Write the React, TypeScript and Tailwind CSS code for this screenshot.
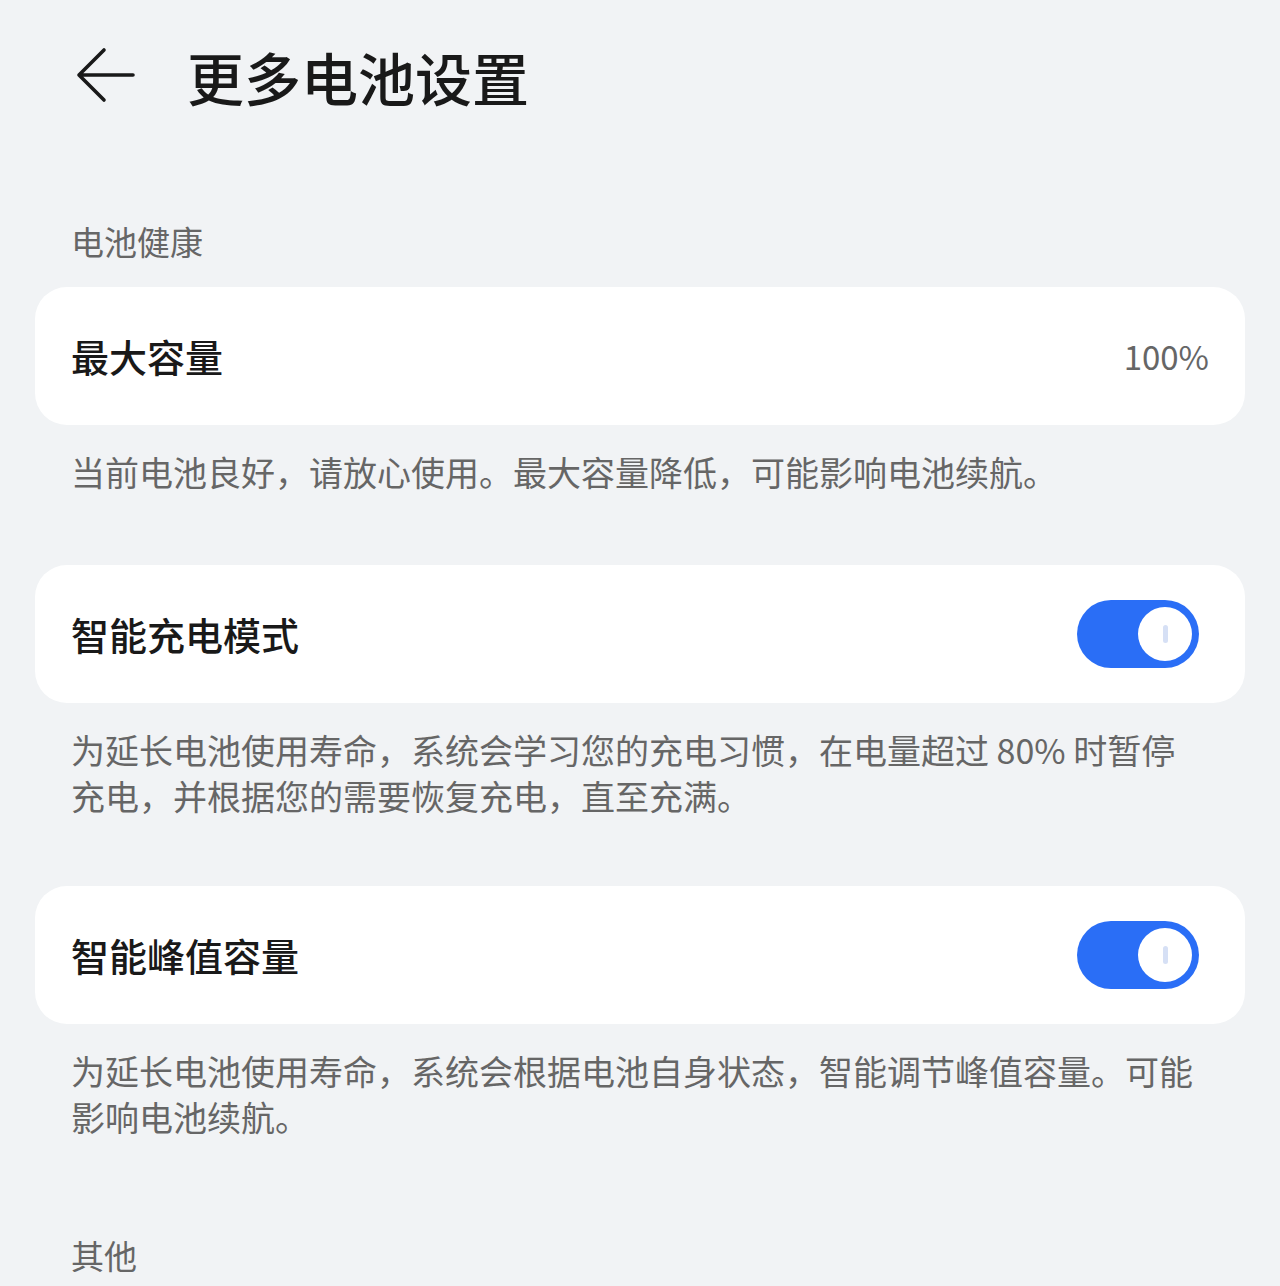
import React from "react";

const font = { fontFamily: '"Noto Sans CJK SC", "Noto Sans", sans-serif' };

function BackArrow() {
  return (
    <svg width="60" height="60" viewBox="0 0 60 60" className="shrink-0">
      <path
        d="M3 29 L57 29 M28 4 L3 29 L28 54"
        fill="none"
        stroke="#191919"
        strokeWidth="3.6"
        strokeLinecap="round"
        strokeLinejoin="round"
      />
    </svg>
  );
}

function Toggle() {
  return (
    <div className="relative h-[68px] w-[122px] shrink-0 rounded-full bg-[#2a6ef6]">
      <div className="absolute right-[7px] top-[7px] flex h-[54px] w-[54px] items-center justify-center rounded-full bg-white">
        <div className="h-[18px] w-[5px] rounded-full bg-[#d6e0f5]" />
      </div>
    </div>
  );
}

function Card({ title, right }: { title: string; right: React.ReactNode }) {
  return (
    <div className="mx-[35px] flex h-[138px] items-center justify-between rounded-[32px] bg-white pl-[36px]">
      <span className="text-[38px] font-medium leading-none text-[#191919]">{title}</span>
      {right}
    </div>
  );
}

function Desc({ children, top }: { children: React.ReactNode; top: string }) {
  return (
    <p className={`${top} pl-[71px] pr-[80px] text-[34px] leading-[46px] text-[#666666]`}>
      {children}
    </p>
  );
}

export default function App() {
  return (
    <div className="h-[1286px] w-[1280px] overflow-hidden bg-[#f1f3f5]" style={font}>
      <header className="flex h-[152px] items-center pl-[76px]">
        <BackArrow />
        <h1 className="ml-[51px] text-[57px] font-medium leading-none text-[#191919]">更多电池设置</h1>
      </header>

      <div className="mt-[67px] pl-[71px] text-[33px] leading-[44px] text-[#666666]">电池健康</div>

      <div className="mt-[24px]">
        <Card
          title="最大容量"
          right={<span className="pr-[36px] text-[33px] leading-none text-[#666666]">100%</span>}
        />
      </div>
      <Desc top="mt-[24px]">当前电池良好，请放心使用。最大容量降低，可能影响电池续航。</Desc>

      <div className="mt-[70px]">
        <Card title="智能充电模式" right={<div className="pr-[46px]"><Toggle /></div>} />
      </div>
      <Desc top="mt-[24px]">
        为延长电池使用寿命，系统会学习您的充电习惯，在电量超过 80% 时暂停充电，并根据您的需要恢复充电，直至充满。
      </Desc>

      <div className="mt-[67px]">
        <Card title="智能峰值容量" right={<div className="pr-[46px]"><Toggle /></div>} />
      </div>
      <Desc top="mt-[24px]">
        为延长电池使用寿命，系统会根据电池自身状态，智能调节峰值容量。可能影响电池续航。
      </Desc>

      <div className="mt-[93px] pl-[71px] text-[33px] leading-[44px] text-[#666666]">其他</div>
    </div>
  );
}
